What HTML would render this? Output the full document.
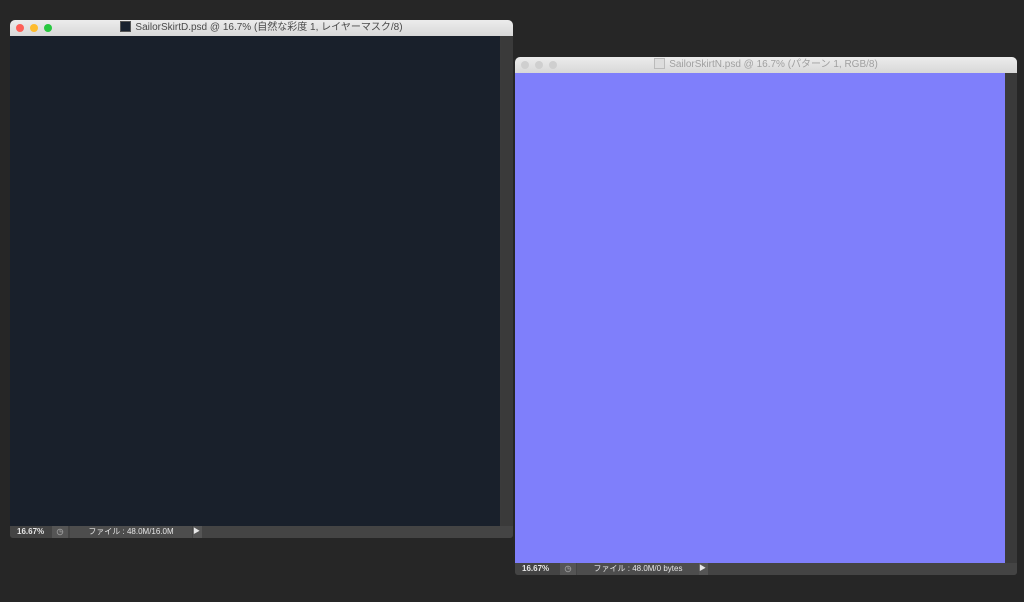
<!DOCTYPE html>
<html><head><meta charset="utf-8"><style>
body{margin:0;width:1024px;height:602px;background:#262626;position:relative;overflow:hidden;font-family:"Liberation Sans","Noto Sans CJK JP",sans-serif}
.w{position:absolute;background:#3b3b3b;border-radius:5px 5px 3px 3px;overflow:hidden}
.t{position:absolute;left:0;right:0;top:0;height:16px;background:linear-gradient(#ececec,#d8d8d8);font-size:10px;color:#4a4a4a;text-align:center;line-height:16px;white-space:nowrap}
.t .ic{display:inline-block;width:9px;height:9px;vertical-align:middle;margin-right:4px;position:relative;top:-1px}
.d{position:absolute;top:4px;width:8px;height:8px;border-radius:50%}
.c{position:absolute;left:0;top:16px}
.sb{position:absolute;top:16px;right:0;width:12px;background:#3a3a3a}
.st{position:absolute;left:0;right:0;height:12px;background:#444;font-size:8px;color:#e6e6e6;font-weight:bold;line-height:12px}
.st span{position:absolute;top:0;height:12px}
</style></head><body>
<div class="w" style="left:10px;top:20px;width:503px;height:518px">
 <div class="t"><div class="d" style="left:6px;background:#fe5f57"></div><div class="d" style="left:20px;background:#febc2e"></div><div class="d" style="left:34px;background:#28c840"></div><span class="ic" style="background:#1a2330;border:1px solid #555"></span>SailorSkirtD.psd @ 16.7% (自然な彩度 1, レイヤーマスク/8)</div>
 <div class="c" style="width:490px;height:490px;background:#19202b"></div>
 <div class="sb" style="height:490px"></div>
 <div class="st" style="top:506px"><span style="left:7px">16.67%</span><span style="left:42px;width:16px;background:#555;color:#999;text-align:center">◷</span><span style="left:60px;width:122px;background:#4d4d4d;text-align:center;font-weight:normal">ファイル : 48.0M/16.0M</span><span style="left:183px;width:9px;background:#555;font-size:7px">▶</span></div>
</div>
<div class="w" style="left:515px;top:57px;width:502px;height:518px">
 <div class="t" style="color:#a0a0a0"><div class="d" style="left:6px;background:#cfcfcf"></div><div class="d" style="left:20px;background:#cfcfcf"></div><div class="d" style="left:34px;background:#cfcfcf"></div><span class="ic" style="background:#ddd;border:1px solid #bbb"></span>SailorSkirtN.psd @ 16.7% (パターン 1, RGB/8)</div>
 <div class="c" style="width:490px;height:490px;background:#7f7ffb"></div>
 <div class="sb" style="height:490px"></div>
 <div class="st" style="top:506px"><span style="left:7px">16.67%</span><span style="left:45px;width:16px;background:#555;color:#999;text-align:center">◷</span><span style="left:62px;width:122px;background:#4d4d4d;text-align:center;font-weight:normal">ファイル : 48.0M/0 bytes</span><span style="left:184px;width:9px;background:#555;font-size:7px">▶</span></div>
</div>
</body></html>
